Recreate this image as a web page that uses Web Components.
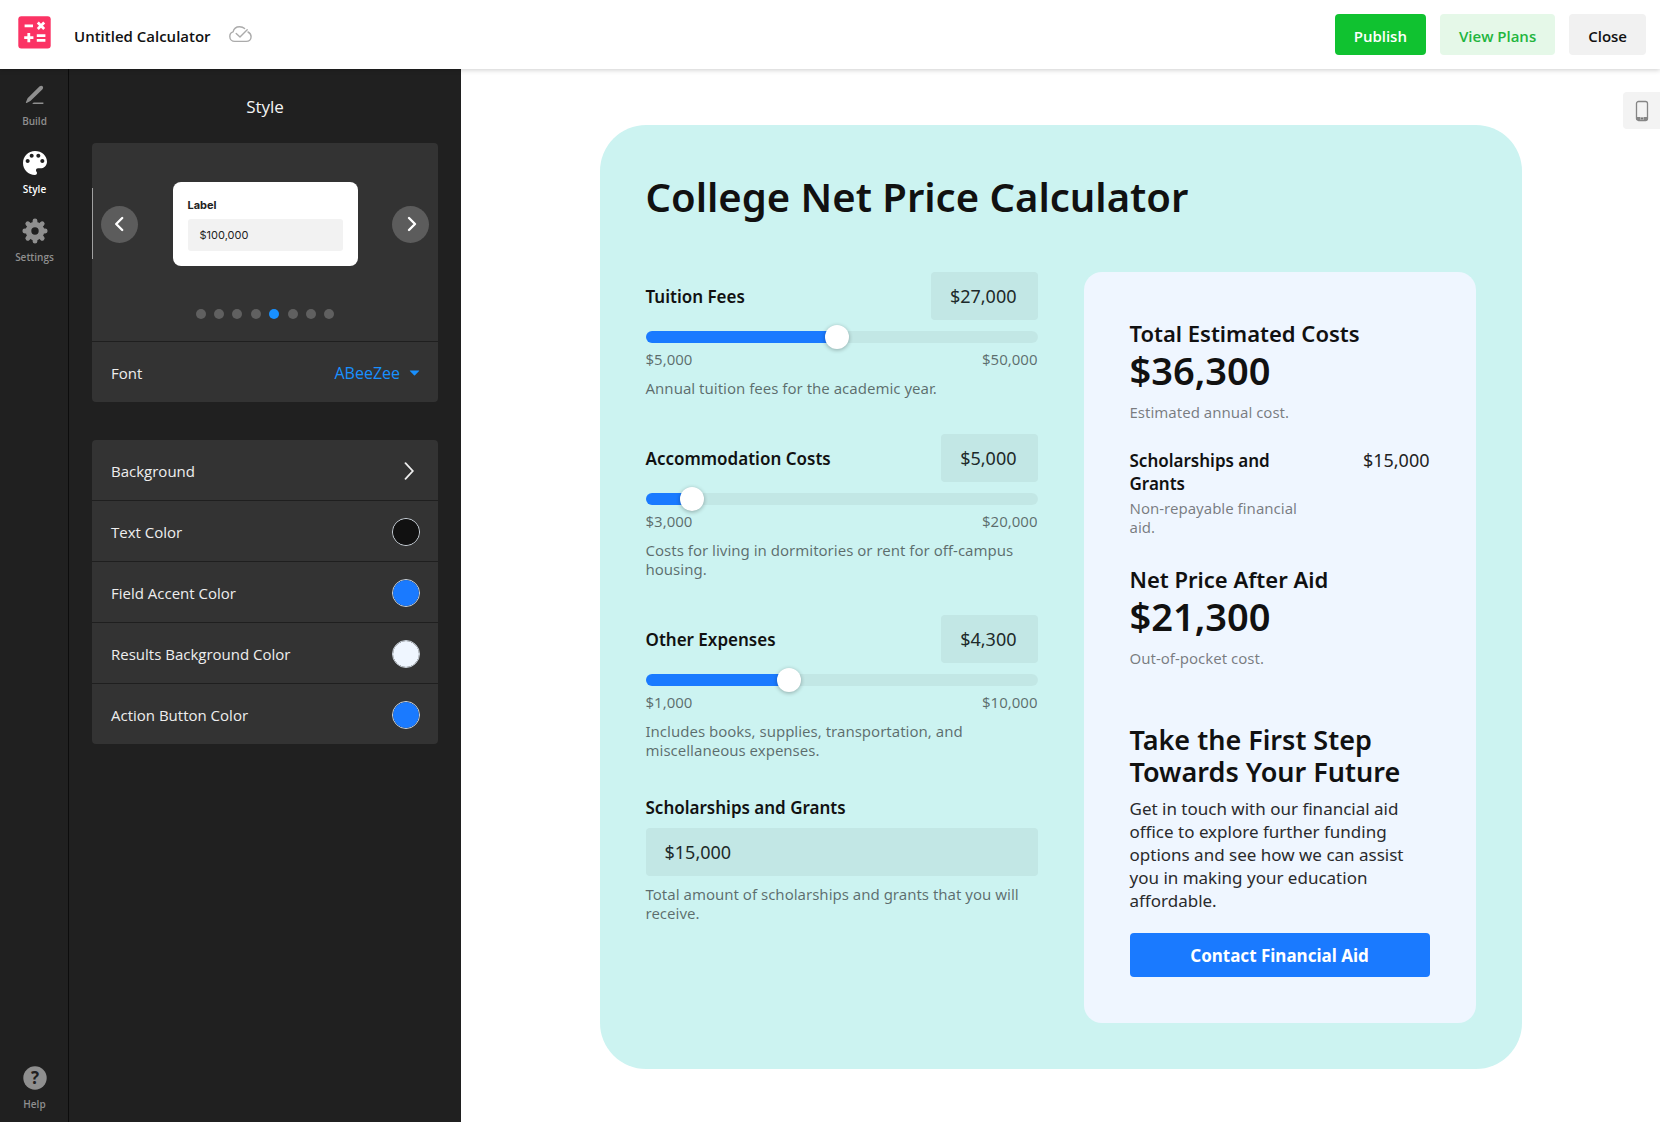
<!DOCTYPE html>
<html lang="en">
<head>
<meta charset="utf-8">
<title>Untitled Calculator</title>
<style>
  :root {
    --ui: "Open Sans", "Noto Sans", sans-serif;
    --calc: "Noto Sans", "Open Sans", sans-serif;
    --accent: #1a7aff;
    --ink: #111;
    --tile: #333;
    --dark: #202020;
  }
  html, body { height: 100%; }
  body { margin: 0; background: #fff; font-family: var(--ui); color: var(--ink); }
</style>
</head>
<body>
<calc-app></calc-app>

<script>
const define = (name, html, setup) => {
  const template = document.createElement('template');
  template.innerHTML = `<style>
    *, *::before, *::after { box-sizing: border-box; }
    h1, h2, h3, p { margin: 0; }
    button, input, select { font: inherit; color: inherit; margin: 0; padding: 0; border: 0; background: none; }
    button, select { cursor: pointer; }
    svg { display: block; }
  </style>` + html;
  customElements.define(name, class extends HTMLElement {
    constructor() {
      super();
      this.attachShadow({ mode: 'open' }).append(template.content.cloneNode(true));
    }
    connectedCallback() {
      if (setup && !this.ready) { this.ready = true; setup(this, s => this.shadowRoot.querySelector(s)); }
    }
  });
};

/* ---------- top bar ---------- */
define('app-button', `
<style>
  :host { display: block; }
  button { height: 41px; padding: 2px 19px 0; border-radius: 4px; background: #f1f1f1; color: #111; font-size: 15px; font-weight: 600; line-height: 24px; white-space: nowrap; }
  :host([kind=primary]) button { background: #10c230; color: #fff; }
  :host([kind=soft]) button { background: #e5f8e8; color: #22b53d; }
</style>
<button type="button"><slot></slot></button>`);

define('app-header', `
<style>
  :host { display: block; position: relative; z-index: 1; background: #fff; box-shadow: 0 1px 5px rgba(0,0,0,.2); }
  header { display: flex; align-items: center; height: 69px; padding: 0 14px 0 18px; }
  h1 { margin: 0 18px 0 23px; padding-top: 2px; font-size: 15px; font-weight: 600; line-height: 24px; }
  .logo { margin-bottom: 4px; }
  nav { display: flex; gap: 14px; margin-left: auto; }
</style>
<header>
  <svg class="logo" width="33" height="33" viewBox="0 0 33 33" fill="none" stroke="#fff" stroke-width="2.800" aria-hidden="true">
    <rect x=".3" y=".2" width="32.400" height="32.200" rx="3" fill="#fb3364" stroke="none"/>
    <path d="M6.600 9.800h8.400M19.800 6.500l6.400 6.500M26.200 6.500l-6.400 6.500M6.200 21.600h9.200M10.800 17v9.200M18.800 19.600h8.600M18.800 24.300h8.600"/>
  </svg>
  <h1>Untitled Calculator</h1>
  <svg width="23" height="17" viewBox="0 0 23 17" fill="none" stroke="#ababab" stroke-width="1.400" stroke-linecap="round" stroke-linejoin="round" aria-hidden="true">
    <path d="M15.600 2.600C14.300 1.400 12.500.8 10.600.8 7.300.8 4.700 3 4.100 5.900 2 6.500.8 8.300.8 10.400c0 2.900 2.200 5 5 5h11.400c2.800 0 4.900-1.900 4.900-4.600 0-2.300-1.300-4-3.100-4.800M7.200 7.400l3.800 3.500 7.200-7.200"/>
  </svg>
  <nav>
    <app-button kind="primary">Publish</app-button>
    <app-button kind="soft">View Plans</app-button>
    <app-button>Close</app-button>
  </nav>
</header>`);

/* ---------- icon rail ---------- */
define('rail-item', `
<style>
  :host { display: block; color: #8f8f8f; }
  :host([active]) { color: #fff; }
  button { display: flex; flex-direction: column; align-items: center; gap: 6px; width: 100%; font-size: 10px; font-weight: 600; line-height: 14px; }
  .icon { display: grid; place-items: center; height: 26px; }
</style>
<button type="button"><span class="icon"><slot name="icon"></slot></span><slot></slot></button>`);

define('side-rail', `
<style>
  :host { display: block; background: var(--dark); border-right: 1px solid #0c0c0c; }
  nav { display: flex; flex-direction: column; gap: 22px; height: 100%; box-sizing: border-box; padding: 13px 0 14px 1px; }
  .help { margin-top: auto; }
</style>
<nav>
  <rail-item>
    <svg slot="icon" width="20" height="20" viewBox="0 0 20 20" fill="currentColor" aria-hidden="true">
      <path d="M14.400 1.600c1.200-1.100 2.500-1 3.200-.3s.8 2-.3 3.200L5.400 16 1.600 18c-.5.2-.9-.2-.7-.7l1.700-4Z"/>
      <path d="M8.600 17.400h9.800v1.500H7.200Z"/>
    </svg>Build</rail-item>
  <rail-item active>
    <svg slot="icon" width="24" height="24" viewBox="3 3 18 18" fill="currentColor" aria-hidden="true">
      <path d="M12 3c-4.970 0-9 4.030-9 9s4.030 9 9 9c.83 0 1.500-.67 1.500-1.500 0-.39-.15-.74-.39-1.010-.23-.26-.38-.61-.38-.99 0-.83.67-1.500 1.500-1.500H16c2.760 0 5-2.240 5-5 0-4.420-4.030-8-9-8zm-5.500 9c-.83 0-1.500-.67-1.500-1.500S5.670 9 6.500 9 8 9.670 8 10.500 7.330 12 6.500 12zm3-4C8.670 8 8 7.330 8 6.500S8.670 5 9.500 5s1.500.67 1.500 1.500S10.330 8 9.500 8zm5 0c-.83 0-1.500-.67-1.500-1.500S13.670 5 14.500 5s1.500.67 1.500 1.500S15.330 8 14.500 8zm3 4c-.83 0-1.500-.67-1.500-1.500S16.670 9 17.500 9s1.500.67 1.500 1.500-.67 1.500-1.500 1.500z"/>
    </svg>Style</rail-item>
  <rail-item>
    <svg slot="icon" width="26" height="26" viewBox="-13 -13 26 26" fill="none" stroke="currentColor" aria-hidden="true">
      <circle r="6.500" stroke-width="5.600"/>
      <path stroke-width="4.800" stroke-linecap="round" d="M0-8v-2.200M0 8v2.200M-8 0h-2.200M8 0h2.200M5.700-5.700l1.500-1.500M5.700 5.700l1.500 1.500M-5.700-5.700l-1.500-1.500M-5.700 5.700l-1.500 1.500"/>
    </svg>Settings</rail-item>
  <rail-item class="help">
    <svg slot="icon" width="24" height="24" viewBox="0 0 24 24" aria-hidden="true">
      <circle cx="12" cy="12" r="11.700" fill="currentColor"/>
      <text x="12" y="18" text-anchor="middle" font-size="17" font-weight="700" fill="#202020">?</text>
    </svg>Help</rail-item>
</nav>`);

/* ---------- style panel ---------- */
define('theme-carousel', `
<style>
  :host { display: block; position: relative; }
  .stage { display: flex; align-items: center; justify-content: space-between; padding: 39px 9px 0; }
  .arrow { display: grid; place-items: center; width: 37px; height: 37px; border-radius: 50%; background: #5c5c5c; }
  .sample { width: 185px; padding: 15px; border-radius: 8px; background: #fff; color: #222; font: 11px/16px Inter, sans-serif; }
  .sample b { display: block; line-height: 17px; margin-bottom: 5px; }
  .sample span { display: block; padding: 0 12px; border-radius: 3px; background: #f2f2f2; line-height: 32px; }
  .peek { position: absolute; left: 0; top: 45px; width: 1px; height: 71px; background: #a0a0a0; }
  .dots { display: flex; justify-content: space-between; width: 139px; margin: 0 auto; padding: 43px 0 22px; }
  .dots button { width: 10px; height: 10px; border-radius: 50%; background: #606060; }
  .dots button.on { background: #1890ff; }
</style>
<div class="peek"></div>
<div class="stage">
  <button class="arrow" type="button" aria-label="Previous theme">
    <svg width="12" height="16" viewBox="0 0 12 16" fill="none" stroke="#fff" stroke-width="2.400" stroke-linecap="round" stroke-linejoin="round"><path d="M8.200 2 2.200 8l6 6"/></svg>
  </button>
  <div class="sample"><b>Label</b><span>$100,000</span></div>
  <button class="arrow" type="button" aria-label="Next theme">
    <svg width="12" height="16" viewBox="0 0 12 16" fill="none" stroke="#fff" stroke-width="2.400" stroke-linecap="round" stroke-linejoin="round"><path d="m4 2 6 6-6 6"/></svg>
  </button>
</div>
<div class="dots"></div>`, (host, $) => {
  for (let i = 1; i <= 8; i++) {
    const dot = document.createElement('button');
    dot.type = 'button';
    dot.ariaLabel = 'Theme ' + i;
    if (i === 5) dot.className = 'on';
    $('.dots').append(dot);
  }
});

define('setting-row', `
<style>
  :host { display: flex; align-items: center; justify-content: space-between; height: 60px; box-sizing: border-box; padding: 2px 18px 0 19px; color: #eee; font-size: 15px; line-height: 22px; }
  .pick { display: flex; align-items: center; gap: 9px; color: #1890ff; font-size: 16px; }
  select { appearance: none; outline: none; text-align: right; }
  input { appearance: none; display: block; width: 28px; height: 28px; border: 1px solid #ccd4dc; border-radius: 50%; overflow: hidden; cursor: pointer; }
  input::-webkit-color-swatch-wrapper { padding: 0; }
  input::-webkit-color-swatch { border: 0; border-radius: 50%; }
  .go { padding: 0 6px; }
</style>
<label for="control"><slot></slot></label>`, (host, $) => {
  const holder = document.createElement('template');
  if (host.hasAttribute('color')) {
    holder.innerHTML = `<input id="control" type="color" value="${host.getAttribute('color')}">`;
  } else if (host.hasAttribute('option')) {
    holder.innerHTML = `<span class="pick"><select id="control"><option>${host.getAttribute('option')}</option></select>
      <svg width="11" height="6" viewBox="0 0 10 6" fill="currentColor" aria-hidden="true"><path d="M.6.400h8.800q.6.200.2.700L5.500 5.300q-.5.400-1 0L.4 1.100Q0 .6.600.400Z"/></svg></span>`;
  } else {
    holder.innerHTML = `<button id="control" class="go" type="button" aria-label="Open">
      <svg width="10" height="18" viewBox="0 0 10 18" fill="none" stroke="#eee" stroke-width="1.800" stroke-linecap="round"><path d="m1.500 1.200 7.300 7.800-7.300 7.800"/></svg></button>`;
  }
  host.shadowRoot.append(holder.content);
});

define('setting-group', `
<style>
  :host { display: flex; flex-direction: column; gap: 1px; border-radius: 4px; overflow: hidden; background: #1f1f1f; }
  ::slotted(*) { background: var(--tile); }
</style>
<slot></slot>`);

define('style-panel', `
<style>
  :host { display: block; padding: 0 23px; background: var(--dark); }
  h2 { padding-top: 2px; color: #f4f4f4; font-size: 17px; font-weight: 400; line-height: 72px; text-align: center; }
  .groups { display: grid; gap: 38px; }
</style>
<h2>Style</h2>
<div class="groups">
  <setting-group>
    <theme-carousel></theme-carousel>
    <setting-row option="ABeeZee">Font</setting-row>
  </setting-group>
  <setting-group>
    <setting-row>Background</setting-row>
    <setting-row color="#111111">Text Color</setting-row>
    <setting-row color="#1a7aff">Field Accent Color</setting-row>
    <setting-row color="#eff6ff">Results Background Color</setting-row>
    <setting-row color="#1a7aff">Action Button Color</setting-row>
  </setting-group>
</div>`);

/* ---------- calculator ---------- */
const fieldStyles = `
  :host { display: block; }
  label { font-size: 17px; font-weight: 600; line-height: 23px; }
  .box { height: 48px; padding: 0 21px 0 19px; border-radius: 4px; background: rgba(17,17,17,.05); color: #1d2a2a; font-size: 18px; line-height: 23px; outline: none; }
  .note { color: rgba(17,17,17,.6); font-size: 15px; line-height: 19px; }`;

define('range-field', `
<style>${fieldStyles}
  .head { display: flex; align-items: center; justify-content: space-between; }
  .box { field-sizing: content; text-align: right; }
  .bar { display: flex; align-items: center; height: 12px; margin-top: 11px; border-radius: 6px;
    background: linear-gradient(var(--accent), var(--accent)) 0 / var(--fill) 100% no-repeat rgba(17,17,17,.05); }
  .bar input { appearance: none; flex: 1; min-width: 0; height: 24px; margin: 0 -12px; outline: none; }
  .bar input::-webkit-slider-thumb { appearance: none; width: 24px; height: 24px; border-radius: 50%; background: #fff; box-shadow: 0 1px 4px rgba(0,0,0,.3); }
  .ends { display: flex; justify-content: space-between; margin-top: 7px; }
  p { margin-top: 10px; }
</style>
<div class="head"><label for="value"></label><input id="value" class="box" type="text"></div>
<div class="bar"><input type="range" step="100"></div>
<div class="ends note"><span></span><span></span></div>
<p class="note"><slot></slot></p>`, (host, $) => {
  const money = n => '$' + n.toLocaleString('en-US');
  const [min, max, value] = ['min', 'max', 'value'].map(k => +host.getAttribute(k));
  const range = $('.bar input'), box = $('.box');
  $('label').textContent = range.ariaLabel = host.getAttribute('label');
  $('.ends span').textContent = money(min);
  $('.ends span:last-child').textContent = money(max);
  range.min = min; range.max = max; range.value = value;
  const show = () => {
    box.value = money(+range.value);
    box.setAttribute('value', box.value);
    $('.bar').style.setProperty('--fill', (range.value - min) / (max - min) * 100 + '%');
  };
  range.addEventListener('input', show);
  show();
});

define('money-field', `
<style>${fieldStyles}
  label { display: block; }
  .box { display: block; width: 100%; margin: 9px 0; }
</style>
<label for="value"></label>
<input id="value" class="box" type="text">
<p class="note"><slot></slot></p>`, (host, $) => {
  $('label').textContent = host.getAttribute('label');
  $('input').setAttribute('value', host.getAttribute('value'));
});

define('result-item', `
<style>
  :host { display: block; }
  h3 { font-size: 22px; font-weight: 600; line-height: 30px; }
  .value { font-size: 38px; font-weight: 600; line-height: 45px; }
  .note { margin-top: 10px; color: rgba(17,17,17,.55); font-size: 15px; line-height: 19px; }
  :host([compact]) { display: grid; grid-template-columns: 3fr 2fr; }
  :host([compact]) h3 { font-size: 17px; line-height: 23px; }
  :host([compact]) .value { font-size: 18px; font-weight: 400; line-height: 23px; text-align: right; color: #222; }
  :host([compact]) .note { margin-top: 4px; }
</style>
<h3></h3><p class="value"></p><p class="note"><slot></slot></p>`, (host, $) => {
  $('h3').textContent = host.getAttribute('label');
  $('.value').textContent = host.getAttribute('value');
});

define('results-card', `
<style>
  :host { display: flex; flex-direction: column; gap: 27px; padding: 46px; border-radius: 18px; background: #eff6ff; }
  .cta { display: flex; flex-direction: column; margin-top: 29px; }
  h2 { font-size: 27px; font-weight: 600; line-height: 32px; }
  p { margin: 9px 0 21px; color: #2a2a2c; font-size: 17px; line-height: 23px; }
  button { height: 44px; border-radius: 4px; background: var(--accent); color: #fff; font-size: 17px; font-weight: 700; line-height: 23px; }
</style>
<result-item label="Total Estimated Costs" value="$36,300">Estimated annual cost.</result-item>
<result-item compact label="Scholarships and Grants" value="$15,000">Non-repayable financial aid.</result-item>
<result-item label="Net Price After Aid" value="$21,300">Out-of-pocket cost.</result-item>
<div class="cta">
  <h2>Take the First Step Towards Your Future</h2>
  <p>Get in touch with our financial aid office to explore further funding options and see how we can assist you in making your education affordable.</p>
  <button type="button">Contact Financial Aid</button>
</div>`);

define('calc-card', `
<style>
  :host { display: block; box-sizing: border-box; width: 100%; max-width: 922px; padding: 46px; border-radius: 46px; background: #ccf3f1; font-family: var(--calc); }
  h1 { font-size: 40px; font-weight: 600; line-height: 52px; margin-bottom: 49px; }
  .columns { display: grid; grid-template-columns: 1fr 1fr; gap: 46px; }
  form { display: flex; flex-direction: column; gap: 36px; }
</style>
<h1>College Net Price Calculator</h1>
<div class="columns">
  <form>
    <range-field label="Tuition Fees" min="5000" max="50000" value="27000">Annual tuition fees for the academic year.</range-field>
    <range-field label="Accommodation Costs" min="3000" max="20000" value="5000">Costs for living in dormitories or rent for off-campus housing.</range-field>
    <range-field label="Other Expenses" min="1000" max="10000" value="4300">Includes books, supplies, transportation, and miscellaneous expenses.</range-field>
    <money-field label="Scholarships and Grants" value="$15,000">Total amount of scholarships and grants that you will receive.</money-field>
  </form>
  <results-card></results-card>
</div>`);

define('calc-app', `
<style>
  :host { display: grid; grid-template: auto 1fr / 69px 392px 1fr; box-sizing: border-box; min-height: 100%; padding-bottom: 1px; }
  app-header { grid-column: 1 / -1; }
  main { position: relative; display: flex; align-items: flex-start; justify-content: center; padding: 56px; }
  .device { position: absolute; right: 0; top: 23px; display: grid; place-items: center; width: 37px; height: 37px; border-radius: 4px 0 0 4px; background: #f3f3f3; }
</style>
<app-header></app-header>
<side-rail></side-rail>
<style-panel></style-panel>
<main>
  <calc-card></calc-card>
  <button class="device" type="button" aria-label="Phone preview">
    <svg width="14" height="22" viewBox="0 0 14 22" fill="none" stroke="#858585" aria-hidden="true">
      <rect x="1.500" y="1.500" width="11" height="19" rx="2" stroke-width="1.300"/>
      <path d="M1.500 18.500h4M8.500 18.500h4" stroke-width="3"/>
      <circle cx="7" cy="18.500" r="1.200" fill="#777" stroke="none"/>
    </svg>
  </button>
</main>`);
</script>
</body>
</html>
